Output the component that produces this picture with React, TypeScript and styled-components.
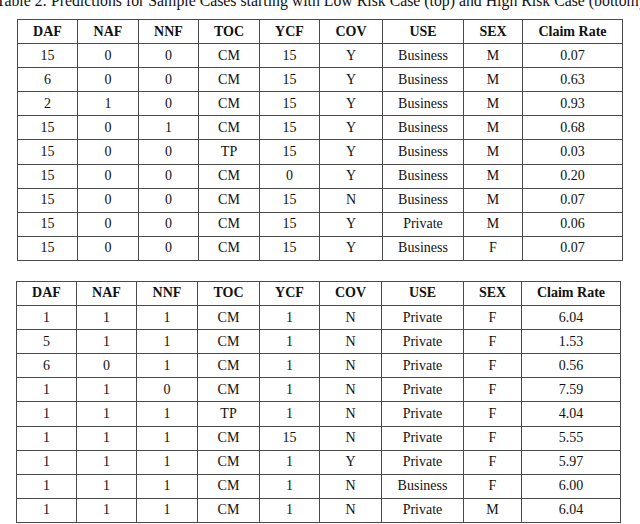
import React from "react";
import styled, { createGlobalStyle } from "styled-components";

const GlobalStyle = createGlobalStyle`
  html, body {
    margin: 0;
    padding: 0;
    background: #ffffff;
    overflow: hidden;
  }
  body {
    width: 640px;
    height: 524px;
    font-family: "Liberation Serif", "Times New Roman", serif;
    color: #111111;
  }
`;

const Page = styled.div`
  width: 640px;
  display: flex;
  flex-direction: column;
  align-items: center;
`;

const Caption = styled.div`
  width: 640px;
  display: flex;
  justify-content: center;
  margin-top: -7px;
  font-size: 15.8px;
  line-height: 16px;
  white-space: nowrap;
`;

const Stack = styled.div`
  width: 640px;
  display: flex;
  flex-direction: column;
  gap: 20px;
  margin-top: 10px;
`;

const Table = styled.table<{ $left: number }>`
  border-collapse: collapse;
  margin-left: ${(p) => p.$left}px;
  font-size: 14px;
  table-layout: fixed;
  border: 1px solid #4a4a4a;
`;

const HeadCell = styled.th`
  height: 23.1px;
  padding: 0;
  font-weight: bold;
  text-align: center;
  vertical-align: middle;
  border: 1px solid #4a4a4a;
`;

const Cell = styled.td`
  height: 23.1px;
  padding: 0;
  text-align: center;
  vertical-align: middle;
  border: 1px solid #4a4a4a;
`;

const headers = ["DAF", "NAF", "NNF", "TOC", "YCF", "COV", "USE", "SEX", "Claim Rate"];

const lowRisk: string[][] = [
  ["15", "0", "0", "CM", "15", "Y", "Business", "M", "0.07"],
  ["6", "0", "0", "CM", "15", "Y", "Business", "M", "0.63"],
  ["2", "1", "0", "CM", "15", "Y", "Business", "M", "0.93"],
  ["15", "0", "1", "CM", "15", "Y", "Business", "M", "0.68"],
  ["15", "0", "0", "TP", "15", "Y", "Business", "M", "0.03"],
  ["15", "0", "0", "CM", "0", "Y", "Business", "M", "0.20"],
  ["15", "0", "0", "CM", "15", "N", "Business", "M", "0.07"],
  ["15", "0", "0", "CM", "15", "Y", "Private", "M", "0.06"],
  ["15", "0", "0", "CM", "15", "Y", "Business", "F", "0.07"],
];

const highRisk: string[][] = [
  ["1", "1", "1", "CM", "1", "N", "Private", "F", "6.04"],
  ["5", "1", "1", "CM", "1", "N", "Private", "F", "1.53"],
  ["6", "0", "1", "CM", "1", "N", "Private", "F", "0.56"],
  ["1", "1", "0", "CM", "1", "N", "Private", "F", "7.59"],
  ["1", "1", "1", "TP", "1", "N", "Private", "F", "4.04"],
  ["1", "1", "1", "CM", "15", "N", "Private", "F", "5.55"],
  ["1", "1", "1", "CM", "1", "Y", "Private", "F", "5.97"],
  ["1", "1", "1", "CM", "1", "N", "Business", "F", "6.00"],
  ["1", "1", "1", "CM", "1", "N", "Private", "M", "6.04"],
];

const topWidths = [60, 61, 60, 61, 60, 63, 81, 59, 100];
const bottomWidths = [60, 60, 61, 62, 60, 62, 82, 58, 99];

function CaseTable({ rows, widths, left }: { rows: string[][]; widths: number[]; left: number }) {
  const total = widths.reduce((a, b) => a + b, 0);
  return (
    <Table $left={left} style={{ width: total }}>
      <colgroup>
        {widths.map((w, i) => (
          <col key={i} style={{ width: w }} />
        ))}
      </colgroup>
      <thead>
        <tr>
          {headers.map((h) => (
            <HeadCell key={h}>{h}</HeadCell>
          ))}
        </tr>
      </thead>
      <tbody>
        {rows.map((r, i) => (
          <tr key={i}>
            {r.map((c, j) => (
              <Cell key={j}>{c}</Cell>
            ))}
          </tr>
        ))}
      </tbody>
    </Table>
  );
}

export default function App() {
  return (
    <>
      <GlobalStyle />
      <Page>
        <Caption>
          Table 2: Predictions for Sample Cases starting with Low Risk Case (top) and High Risk Case (bottom)
        </Caption>
        <Stack>
          <CaseTable rows={lowRisk} widths={topWidths} left={17} />
          <CaseTable rows={highRisk} widths={bottomWidths} left={16} />
        </Stack>
      </Page>
    </>
  );
}
